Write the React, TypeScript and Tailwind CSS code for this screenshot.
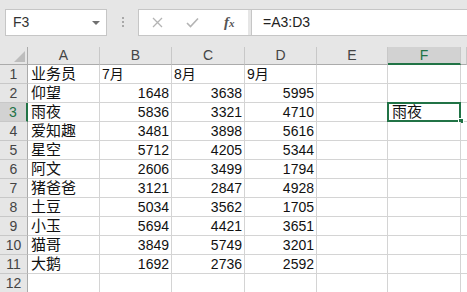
const rows: [string, string, string, string][] = [
  ["业务员", "7月", "8月", "9月"],
  ["仰望", "1648", "3638", "5995"],
  ["雨夜", "5836", "3321", "4710"],
  ["爱知趣", "3481", "3898", "5616"],
  ["星空", "5712", "4205", "5344"],
  ["阿文", "2606", "3499", "1794"],
  ["猪爸爸", "3121", "2847", "4928"],
  ["土豆", "5034", "3562", "1705"],
  ["小玉", "5694", "4421", "3651"],
  ["猫哥", "3849", "5749", "3201"],
  ["大鹅", "1692", "2736", "2592"],
  ["", "", "", ""],
];

// G only peeks in at the right edge, its letter is off-screen
const cols = ["A", "B", "C", "D", "E", "F", ""];
const font = { fontFamily: '"Liberation Sans", "Noto Sans CJK SC", sans-serif' };

function TopBar() {
  return (
    <div className="flex h-[47px] items-start bg-[#e6e6e6] pt-[9px]">
      <div className="ml-[5px] flex h-[27px] w-[102px] items-center justify-between border border-[#c6c6c6] bg-white pl-[7px] pr-[6px]">
        <span className="text-[14px] text-[#333]">F3</span>
        <span className="h-0 w-0 border-x-[4px] border-t-[4px] border-x-transparent border-t-[#707070]" />
      </div>
      <div className="ml-[14px] mt-[8px] flex w-[4px] flex-col items-center gap-[2px]">
        <span className="h-[2px] w-[2px] bg-[#a8a8a8]" />
        <span className="h-[2px] w-[2px] bg-[#a8a8a8]" />
        <span className="h-[2px] w-[2px] bg-[#a8a8a8]" />
      </div>
      <div className="ml-[13px] flex h-[27px] w-[110px] items-center border border-r-0 border-[#c6c6c6] bg-white">
        <svg className="ml-[13px]" width="11" height="11" viewBox="0 0 11 11">
          <path d="M1 1L10 10M10 1L1 10" stroke="#b4b4b4" strokeWidth="1.3" fill="none" />
        </svg>
        <svg className="ml-[23px]" width="13" height="11" viewBox="0 0 13 11">
          <path d="M1 6L4.5 9.5L12 1.5" stroke="#b4b4b4" strokeWidth="1.6" fill="none" />
        </svg>
        <span
          className="ml-[25px] text-[15px] font-bold italic text-[#555]"
          style={{ fontFamily: '"Liberation Serif", serif' }}
        >
          f<span className="text-[11px]">x</span>
        </span>
      </div>
      <div className="h-[27px] w-[3px] border-y border-[#c6c6c6] bg-[#e6e6e6]" />
      <div className="flex h-[27px] flex-1 items-center border border-r-0 border-[#c6c6c6] bg-white pl-[11px]">
        <span className="text-[14px] text-[#222]">=A3:D3</span>
      </div>
    </div>
  );
}

function HeaderRow() {
  return (
    <>
      <div className="relative h-[18px] border-b border-r border-[#ababab] bg-[#e6e6e6]">
        <span className="absolute bottom-[2px] right-[2px] h-0 w-0 border-b-[11px] border-l-[11px] border-b-[#bdbdbd] border-l-transparent" />
      </div>
      {cols.map((c, i) => {
        const sel = c === "F";
        return (
          <div
            key={i}
            className={
              sel
                ? "flex h-[18px] items-end justify-center border-b-2 border-r border-b-[#217346] border-r-[#c8c8c8] bg-[#d2d2d2] text-[14px] leading-[16px] text-[#217346]"
                : "flex h-[18px] items-end justify-center border-b border-r border-b-[#ababab] border-r-[#c8c8c8] bg-[#e6e6e6] text-[14px] leading-[17px] text-[#444]"
            }
          >
            {c}
          </div>
        );
      })}
    </>
  );
}

export default function App() {
  return (
    <div className="h-[292px] w-[467px] overflow-hidden bg-white" style={font}>
      <TopBar />
      <div className="grid grid-cols-[28px_72px_72px_73px_72px_71px_73px_1fr] bg-[#e6e6e6]">
        <HeaderRow />
        {rows.map((r, i) => {
          const n = i + 1;
          const sel = n === 3;
          return (
            <div key={n} className="contents">
              <div
                className={
                  sel
                    ? "flex h-[19px] items-center justify-center border-b border-r-2 border-b-[#c8c8c8] border-r-[#217346] bg-[#d2d2d2] text-[14px] text-[#217346]"
                    : "flex h-[19px] items-center justify-center border-b border-r border-b-[#c8c8c8] border-r-[#ababab] bg-[#e6e6e6] text-[14px] text-[#444]"
                }
              >
                {n}
              </div>
              <div className="flex h-[19px] items-center border-b border-r border-[#d4d4d4] bg-white pl-[3px] text-[15px] text-[#111]">
                {r[0]}
              </div>
              {[1, 2, 3].map((k) => {
                const isNum = /^\d+$/.test(r[k]);
                return (
                  <div
                    key={k}
                    className={
                      isNum
                        ? "flex h-[19px] items-center justify-end border-b border-r border-[#d4d4d4] bg-white pr-[2px] text-[14px] text-[#111]"
                        : "flex h-[19px] items-center border-b border-r border-[#d4d4d4] bg-white pl-[2px] text-[14px] text-[#111]"
                    }
                  >
                    {r[k]}
                  </div>
                );
              })}
              <div className="h-[19px] border-b border-r border-[#d4d4d4] bg-white" />
              <div className="relative flex h-[19px] items-center border-b border-r border-[#d4d4d4] bg-white pl-[4px] text-[15px] text-[#111]">
                {sel && (
                  <>
                    <span>雨夜</span>
                    <span className="absolute -bottom-[1px] -left-[1px] -right-[1px] -top-[1px] border-2 border-[#217346]" />
                    <span className="absolute -bottom-[3px] -right-[4px] h-[6px] w-[6px] border border-white bg-[#217346]" />
                  </>
                )}
              </div>
              <div className="h-[19px] border-b border-[#d4d4d4] bg-white" />
            </div>
          );
        })}
      </div>
    </div>
  );
}
